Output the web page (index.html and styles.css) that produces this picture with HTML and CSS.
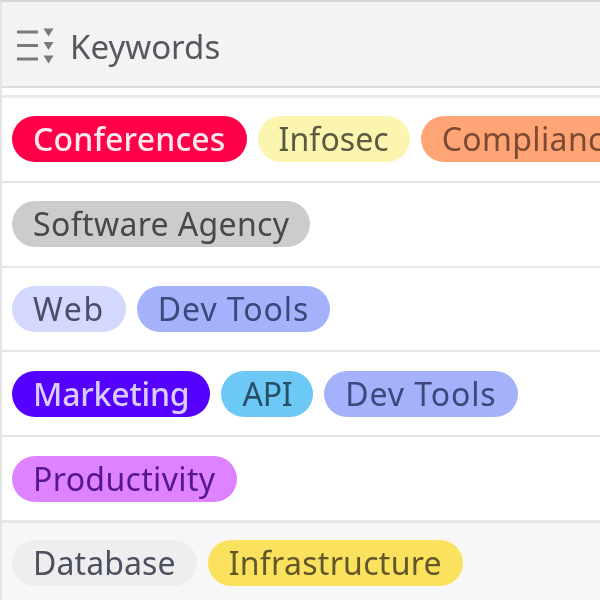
FILE: index.html
```html
<!DOCTYPE html>
<html lang="en">
<head>
<meta charset="utf-8">
<title>Keywords</title>
<link rel="stylesheet" href="styles.css">
</head>
<body>
<div class="table">
  <header class="head">
    <svg class="icon" width="38" height="38" viewBox="0 0 38 38" aria-hidden="true">
      <g fill="#7a7a7a">
        <rect x="0" y="3.500" width="21" height="3"/>
        <rect x="0" y="17" width="21" height="3"/>
        <rect x="0" y="30.500" width="21" height="3"/>
        <path d="M26.500 1.500h10l-5 8z"/>
        <path d="M26.500 15h10l-5 8z"/>
        <path d="M26.500 28.500h10l-5 8z"/>
      </g>
    </svg>
    <span class="title">Keywords</span>
  </header>
  <div class="gap"></div>
  <div class="row">
    <span class="tag conferences">Conferences</span>
    <span class="tag infosec">Infosec</span>
    <span class="tag compliance">Compliance</span>
  </div>
  <div class="row">
    <span class="tag agency">Software Agency</span>
  </div>
  <div class="row">
    <span class="tag web">Web</span>
    <span class="tag devtools">Dev Tools</span>
  </div>
  <div class="row">
    <span class="tag marketing">Marketing</span>
    <span class="tag api">API</span>
    <span class="tag devtools">Dev Tools</span>
  </div>
  <div class="row">
    <span class="tag productivity">Productivity</span>
  </div>
  <div class="row last">
    <span class="tag database">Database</span>
    <span class="tag infrastructure">Infrastructure</span>
  </div>
</div>
</body>
</html>
```
FILE: styles.css
```css
html, body {
  margin: 0;
  height: 100%;
  overflow: hidden;
  background: #fff;
}
.table {
  width: 600px;
  height: 600px;
  box-sizing: border-box;
  border-left: 2px solid #e4e4e4;
  border-top: 2px solid #d6d6d6;
  font-family: "Noto Sans", sans-serif;
  filter: blur(0.6px);
  overflow: hidden;
}
.head {
  height: 86px;
  box-sizing: border-box;
  background: #f3f3f3;
  border-bottom: 2px solid #dcdcdc;
  display: flex;
  align-items: center;
  gap: 15px;
  padding: 4px 0 0 15px;
}
.icon { flex: none; }
.title {
  font-size: 33px;
  color: #55585f;
}
.gap {
  height: 7px;
  border-bottom: 3px solid #e8eaec;
}
.row {
  height: 84.800px;
  box-sizing: border-box;
  border-bottom: 2px solid #e4e6e8;
  display: flex;
  align-items: center;
  gap: 11px;
  padding: 0 0 0 10px;
  white-space: nowrap;
}
.row.last {
  background: #f7f7f7;
  border-top: 1px solid #e4e6e8;
  border-bottom: 0;
  height: 90px;
  padding-bottom: 8px;
}
.tag {
  flex: none;
  height: 46px;
  line-height: 46px;
  box-sizing: border-box;
  padding: 0 21px;
  border-radius: 23px;
  font-size: 32px;
  letter-spacing: 0.35px;
}
.conferences { background: #ff0048; color: #ffe9ef; font-weight: 500; letter-spacing: 0.17px; }
.infosec { background: #fbf5b0; color: #5c5a40; letter-spacing: 0.07px; }
.compliance { background: #ffa474; color: #7c4a32; }
.agency { background: #cccccc; color: #484848; }
.web { background: #d4d8ff; color: #4c4d66; letter-spacing: 1.65px; }
.devtools { background: #a3b2fb; color: #3d477c; letter-spacing: 0.9px; }
.marketing { background: #5500ff; color: #d9ccff; font-weight: 500; letter-spacing: -0.2px; }
.api { background: #6cc8f5; color: #284f66; letter-spacing: -0.3px; }
.productivity { background: #df82ff; color: #561888; }
.database { background: #eeeeee; color: #4c5061; letter-spacing: 0.1px; }
.infrastructure { background: #fae15e; color: #625728; letter-spacing: 0.28px; }
```
